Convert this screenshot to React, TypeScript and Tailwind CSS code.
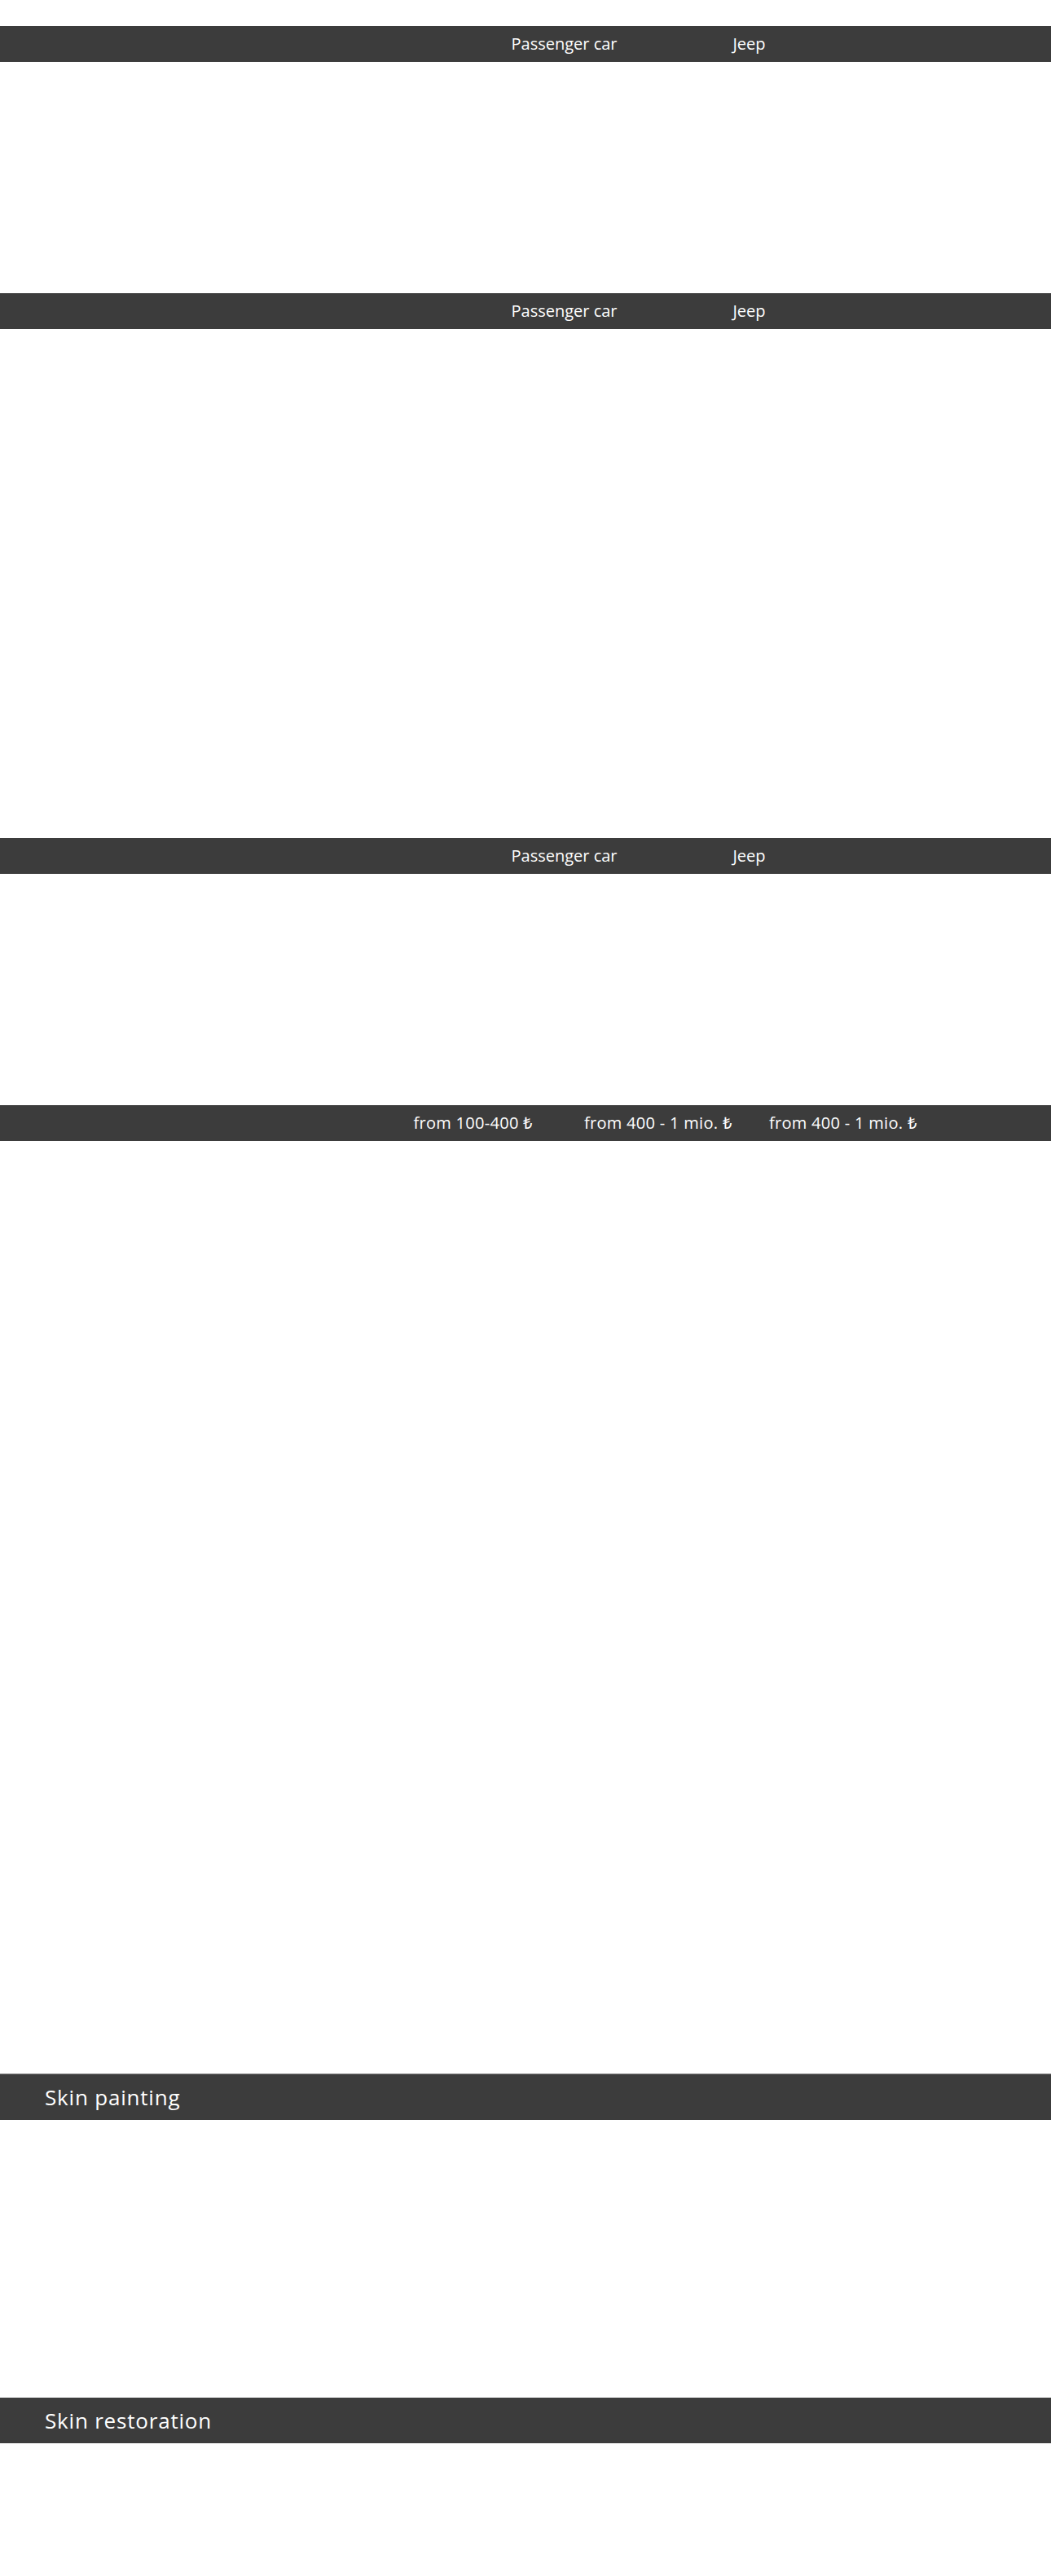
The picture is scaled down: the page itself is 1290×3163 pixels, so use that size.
const font = { fontFamily: '"Open Sans", "Liberation Sans", sans-serif' }

const TypeBar = () => (
  <div className="grid h-[44px] grid-cols-[579px_227px_227px_1fr] items-center bg-[#3c3c3c] text-center text-[20px] text-white">
    <div />
    <div>Passenger car</div>
    <div>Jeep</div>
    <div />
  </div>
)

const PriceBar = () => (
  <div className="grid h-[44px] grid-cols-[467px_227px_227px_227px_1fr] items-center bg-[#3c3c3c] text-center text-[20px] tracking-[0.3px] text-white">
    <div />
    <div>from 100-400 ₺</div>
    <div>from 400 - 1 mio. ₺</div>
    <div>from 400 - 1 mio. ₺</div>
    <div />
  </div>
)

const SectionTitle = ({ title, border }: { title: string; border?: boolean }) => (
  <div
    className={
      border
        ? 'flex h-[57px] items-center border-t border-[#8a8a8a] bg-[#3c3c3c] pl-[55px]'
        : 'flex h-[56px] items-center bg-[#3c3c3c] pl-[55px]'
    }
  >
    <h2 className="text-[26px] font-normal tracking-[0.8px] text-white">{title}</h2>
  </div>
)

export default function App() {
  return (
    <main className="min-h-[3163px] w-full bg-white pt-[32px]" style={font}>
      <TypeBar />
      <div className="h-[284px]" />
      <TypeBar />
      <div className="h-[625px]" />
      <TypeBar />
      <div className="h-[284px]" />
      <PriceBar />
      <div className="h-[1145px]" />
      <SectionTitle title="Skin painting" border />
      <div className="h-[341px]" />
      <SectionTitle title="Skin restoration" />
      <div className="h-[163px]" />
    </main>
  )
}
